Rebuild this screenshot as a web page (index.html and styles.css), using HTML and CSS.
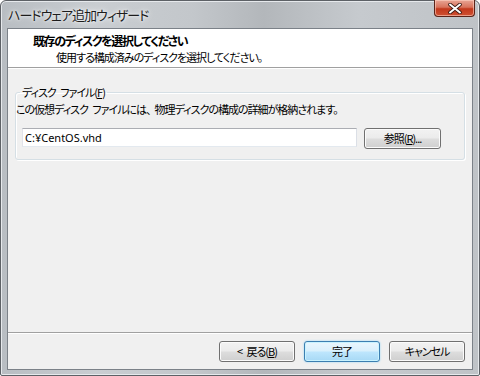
FILE: index.html
```html
<!DOCTYPE html>
<html lang="ja">
<head>
<meta charset="utf-8">
<title>ハードウェア追加ウィザード</title>
<link rel="stylesheet" href="styles.css">
</head>
<body>
<div class="window">
  <div class="titlebar">
    <span class="title">ハードウェア追加ウィザード</span>
    <span class="close"><svg width="14" height="11" viewBox="0 0 14 11"><path d="M2 1.5 L12 9.5 M12 1.5 L2 9.5" stroke="#3a1a14" stroke-width="3.6" stroke-linecap="round"/><path d="M2 1.5 L12 9.5 M12 1.5 L2 9.5" stroke="#ffffff" stroke-width="2" stroke-linecap="round"/></svg></span>
  </div>
  <div class="client">
    <div class="header">
      <div class="h-title">既存のディスクを選択してください</div>
      <div class="h-sub">使用する構成済みのディスクを選択してください。</div>
    </div>
    <div class="content">
      <fieldset class="group">
        <legend class="legend">ディスク<span class="sp"> </span>ファイル(<u>F</u>)</legend>
        <div class="desc">この仮想ディスク<span class="sp"> </span>ファイルには<span class="punct">、</span>物理ディスクの構成の詳細が格納されます。</div>
        <div class="row">
          <div class="input">C:¥CentOS.vhd</div>
          <div class="btn browse">参照(<u>R</u>)...</div>
        </div>
      </fieldset>
    </div>
    <div class="footer">
      <div class="btn">&lt;<span class="sp"> </span>戻る(<u>B</u>)</div>
      <div class="btn default">完了</div>
      <div class="btn">キャンセル</div>
    </div>
  </div>
</div>
</body>
</html>
```
FILE: styles.css
```css
html, body {
  margin: 0;
  padding: 0;
  background: #ffffff;
}
body {
  font-family: "Noto Sans CJK JP", "Noto Sans", sans-serif;
  font-size: 11px;
  letter-spacing: -1px;
  color: #000;
  font-feature-settings: "palt";
}
.sp {
  letter-spacing: 2px;
}
.punct {
  letter-spacing: 3px;
}
.window {
  width: 480px;
  height: 376px;
  box-sizing: border-box;
  border: 1px solid #5d6166;
  border-radius: 6px 6px 2px 2px;
  background: linear-gradient(90deg, #b8bdc2 0%, #c9cdd1 20%, #c3c7cb 40%, #b3b7bb 55%, #c6cace 75%, #bfc3c7 100%);
  display: flex;
  flex-direction: column;
  padding: 0 6px 5px 6px;
  box-shadow: inset 0 0 0 1px #e6e9ec;
}
.titlebar {
  height: 27px;
  display: flex;
  align-items: flex-start;
  justify-content: space-between;
}
.title {
  font-size: 13px;
  line-height: 16px;
  margin-top: 6px;
  margin-left: 1px;
  color: #1c1c1c;
  text-shadow: 0 0 6px #f4f6f8, 0 0 3px #ffffff;
}
.close {
  width: 41px;
  height: 17px;
  margin-top: -1px;
  margin-right: -2px;
  box-sizing: border-box;
  border: 1px solid #5a2319;
  border-top: none;
  border-radius: 0 0 4px 4px;
  background: linear-gradient(180deg, #e8a595 0%, #d8735c 45%, #c2381c 55%, #cf5132 100%);
  box-shadow: inset 0 0 0 1px rgba(255, 210, 195, 0.6);
  display: flex;
  align-items: center;
  justify-content: center;
}
.client {
  flex: 1;
  border: 1px solid #7b8188;
  background: #f0f0f0;
  display: flex;
  flex-direction: column;
}
.header {
  height: 39px;
  background: #ffffff;
  border-bottom: 1px solid #a0a0a0;
  box-shadow: 0 1px 0 #ffffff;
  box-sizing: border-box;
}
.h-title {
  font-weight: bold;
  font-size: 12px;
  letter-spacing: -1.4px;
  line-height: 16px;
  margin: 4px 0 0 25px;
}
.h-sub {
  line-height: 16px;
  margin: 0 0 0 48px;
}
.content {
  flex: 1;
  padding: 16px 7px 0 7px;
}
.group {
  margin: 0;
  padding: 0 0 10px 0;
  border: 1px solid #d5dfe5;
  border-radius: 3px;
  box-shadow: inset 1px 1px 0 #ffffff, 1px 1px 0 #ffffff;
}
.legend {
  margin-left: 4px;
  padding: 0 2px;
  line-height: 16px;
  color: #000;
}
.desc {
  line-height: 16px;
  margin: 1px 0 0 0;
}
.row {
  display: flex;
  align-items: flex-start;
  margin-top: 11px;
}
.input {
  width: 335px;
  height: 19px;
  box-sizing: border-box;
  margin-left: 6px;
  background: #ffffff;
  border: 1px solid #abadb3;
  border-left-color: #e2e3ea;
  border-right-color: #dbdfe6;
  border-bottom-color: #e3e9ef;
  font-family: "Noto Sans", "Noto Sans CJK JP", sans-serif;
  font-size: 11px;
  letter-spacing: 0;
  line-height: 17px;
  padding-left: 2px;
}
.btn {
  width: 77px;
  height: 21px;
  box-sizing: border-box;
  border: 1px solid #707070;
  border-radius: 3px;
  background: linear-gradient(180deg, #f2f2f2 0%, #ebebeb 48%, #dddddd 52%, #cfcfcf 100%);
  box-shadow: inset 0 0 0 1px #fbfbfb;
  text-align: center;
  line-height: 19px;
  font-size: 11px;
}
.browse {
  margin-left: 7px;
}
.footer {
  border-top: 1px solid #a0a0a0;
  box-shadow: inset 0 1px 0 #ffffff;
  height: 37px;
  box-sizing: border-box;
  display: flex;
  justify-content: flex-end;
  gap: 9px;
  padding: 8px 7px 0 0;
}
.footer .btn {
  width: 76px;
}
.btn.default {
  border-color: #3c7fb1;
  background: linear-gradient(180deg, #eaf6fd 0%, #d9f0fc 48%, #bee6fd 52%, #a7d9f5 100%);
  box-shadow: inset 0 0 0 1px #c9f3ff, 0 0 2px #8fd3f5;
}
```
